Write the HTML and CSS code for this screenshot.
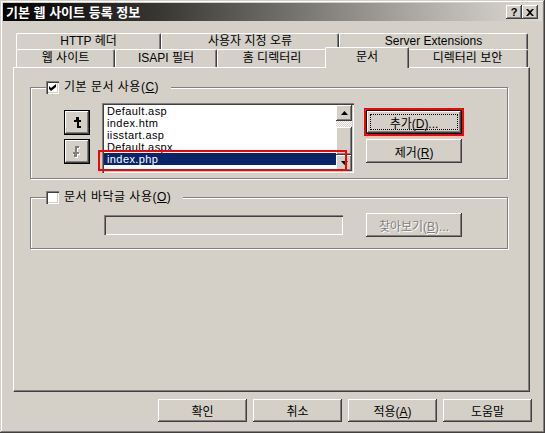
FILE: index.html
```html
<!DOCTYPE html>
<html lang="ko">
<head>
    <meta charset="UTF-8">
    <title>기본 웹 사이트 등록 정보</title>
    <link rel="stylesheet" href="styles.css">
</head>
<body>

    <div class="window">
        <div class="titlebar">
            <span class="title">기본 웹 사이트 등록 정보</span>
            <div class="caption-buttons">
                <span class="cap-btn">?</span>
                <span class="cap-btn">
                    <svg width="8" height="7" viewBox="0 0 8 7"><path d="M0 0h2l2 2 2-2h2l-3 3.5 3 3.5h-2l-2-2-2 2h-2l3-3.5z" fill="#000"/></svg>
                </span>
            </div>
        </div>

        <div class="dialog">
            <!-- 탭 -->
            <div class="tabs">
                <div class="tab-row back">
                    <div class="tab tab-http">HTTP 헤더</div>
                    <div class="tab tab-errors">사용자 지정 오류</div>
                    <div class="tab tab-ext">Server Extensions</div>
                </div>
                <div class="tab-row front">
                    <div class="tab tab-site">웹 사이트</div>
                    <div class="tab tab-isapi">ISAPI 필터</div>
                    <div class="tab tab-home">홈 디렉터리</div>
                    <div class="tab tab-docs active">문서</div>
                    <div class="tab tab-security">디렉터리 보안</div>
                </div>
            </div>

            <div class="panel">
                <fieldset class="group group-docs">
                    <legend>
                        <span class="checkbox">
                            <svg width="7" height="7" viewBox="0 0 7 7"><path d="M0 2l2 2 5-4v3l-5 4-2-2z" fill="#000"/></svg>
                        </span>
                        <span class="label">기본 문서 사용(<u>C</u>)</span>
                    </legend>
                    <div class="group-body">
                        <div class="order-buttons">
                            <button class="icon-btn">
                                <svg width="7" height="11" viewBox="0 0 7 11"><path d="M2 0h3v3h2v2h-2v4h2v2h-4v-6h-3v-2h2z" fill="#000"/></svg>
                            </button>
                            <button class="icon-btn" disabled>
                                <svg width="8" height="12" viewBox="0 0 8 12">
                                    <path d="M3 1h4v2h-2v4h2v2h-2v3h-3v-3h-2v-2h3z" fill="#fff"/>
                                    <path d="M2 0h4v2h-2v4h2v2h-2v3h-3v-3h-2v-2h3z" fill="#808080"/>
                                </svg>
                            </button>
                        </div>

                        <div class="list-wrap">
                            <ul class="file-list">
                                <li>Default.asp</li>
                                <li>index.htm</li>
                                <li>iisstart.asp</li>
                                <li>Default.aspx</li>
                                <li class="selected">index.php</li>
                            </ul>
                            <div class="scrollbar">
                                <div class="sb-btn">
                                    <svg width="7" height="4" viewBox="0 0 7 4"><path d="M3.5 0l3.5 4h-7z" fill="#000"/></svg>
                                </div>
                                <div class="sb-track"></div>
                                <div class="sb-thumb"></div>
                                <div class="sb-btn">
                                    <svg width="7" height="4" viewBox="0 0 7 4"><path d="M0 0h7l-3.5 4z" fill="#000"/></svg>
                                </div>
                            </div>
                            <div class="mark mark-item"></div>
                        </div>

                        <div class="side-buttons">
                            <button class="btn default marked">추가(<u>D</u>)...</button>
                            <button class="btn">제거(<u>R</u>)</button>
                        </div>
                    </div>
                </fieldset>

                <fieldset class="group group-footer">
                    <legend>
                        <span class="checkbox"></span>
                        <span class="label">문서 바닥글 사용(<u>O</u>)</span>
                    </legend>
                    <div class="group-body">
                        <input class="textbox" type="text" disabled>
                        <button class="btn" disabled>찾아보기(<u>B</u>)...</button>
                    </div>
                </fieldset>
            </div>

            <div class="actions">
                <button class="btn wide">확인</button>
                <button class="btn wide">취소</button>
                <button class="btn wide">적용(<u>A</u>)</button>
                <button class="btn wide">도움말</button>
            </div>
        </div>
    </div>

</body>
</html>
```

FILE: styles.css
```css
/* 클래식 윈도우 대화상자 */
:root {
    --face: #d4d0c8;
    --light: #ffffff;
    --shadow: #808080;
    --dark: #404040;
    --select: #0a246a;
}

* { box-sizing: border-box; }

body {
    margin: 0;
    background: var(--face);
    color: #000;
    font-family: "Liberation Sans", "Noto Sans CJK KR", sans-serif;
    font-size: 12px;
}

u { text-underline-offset: 1px; }

.window {
    width: 545px;
    height: 433px;
    padding: 3px;
    background: var(--face);
    box-shadow:
        inset -1px -1px var(--dark),
        inset 1px 1px var(--face),
        inset -2px -2px var(--shadow),
        inset 2px 2px var(--light);
}

/* 제목 표시줄 */
.titlebar {
    height: 18px;
    display: flex;
    align-items: center;
    padding-left: 3px;
    background: linear-gradient(90deg, #000 0%, #3a3936 30%, #a9a69f 75%, #dedbd5 100%);
    color: #fff;
}

.title {
    font-family: "Noto Sans CJK KR", sans-serif;
    font-weight: bold;
    font-size: 13px;
    line-height: 18px;
}

.caption-buttons {
    margin-left: auto;
    margin-right: 4px;
    display: flex;
}

.cap-btn {
    width: 16px;
    height: 14px;
    display: flex;
    align-items: center;
    justify-content: center;
    background: var(--face);
    color: #000;
    font: bold 11px "Liberation Sans", sans-serif;
    box-shadow:
        inset -1px -1px var(--dark),
        inset 1px 1px var(--light),
        inset -2px -2px var(--shadow);
}

.dialog { padding: 12px 0 0 10px; }

/* 탭 */
.tabs { margin-left: 3px; width: 512px; }

.tab-row { display: flex; }
.tab-row.back { height: 16px; }
.tab-row.front { height: 18px; }

.tab {
    background: var(--face);
    border-top: 1px solid var(--light);
    border-left: 1px solid var(--light);
    border-right: 1px solid var(--dark);
    border-radius: 2px 2px 0 0;
    box-shadow: inset -1px 0 var(--shadow);
    text-align: center;
    white-space: nowrap;
}

.back .tab { height: 16px; line-height: 15px; }
.front .tab { height: 18px; line-height: 17px; }

.tab-http { width: 145px; }
.tab-errors { width: 178px; }
.tab-ext { width: 189px; }
.tab-site { width: 99px; }
.tab-isapi { width: 102px; }
.tab-home { width: 110px; }
.tab-docs { width: 80px; }
.tab-security { width: 121px; }

.tab.active {
    position: relative;
    z-index: 1;
    width: 84px;
    height: 21px;
    margin: -2px -2px -1px;
    line-height: 18px;
}

/* 탭 내용 */
.panel {
    width: 517px;
    height: 325px;
    padding: 13px 21px 0 16px;
    border: 1px solid;
    border-color: var(--light) var(--dark) var(--dark) var(--light);
    box-shadow: inset -1px -1px var(--shadow);
}

.group {
    margin: 0;
    min-width: 0;
    border: 1px solid var(--shadow);
    box-shadow: inset 1px 1px var(--light), 1px 1px var(--light);
}

.group legend {
    display: flex;
    align-items: center;
    gap: 5px;
    height: 13px;
    padding: 0 12px 0 0;
    line-height: 13px;
    background: var(--face);
}

.group legend .label { letter-spacing: 0.5px; }

.group-docs { padding: 9px 0 5px 15px; }
.group-footer { margin-top: 12px; padding: 9px 0 11px 15px; }

.group-body { display: flex; align-items: flex-start; }
.group-docs .group-body { margin-left: 18px; }
.group-footer .group-body { margin-left: 58px; }

.checkbox {
    width: 13px;
    height: 13px;
    display: flex;
    align-items: center;
    justify-content: center;
    background: #fff;
    box-shadow:
        inset 1px 1px var(--shadow),
        inset 2px 2px var(--dark),
        inset -1px -1px var(--light),
        inset -2px -2px var(--face);
}

/* 버튼 */
button {
    font: inherit;
    color: #000;
    margin: 0;
    padding: 0;
    border: none;
}

.btn, .icon-btn {
    position: relative;
    background: var(--face);
    box-shadow:
        inset -1px -1px var(--dark),
        inset 1px 1px var(--light),
        inset -2px -2px var(--shadow);
}

.btn { width: 96px; height: 24px; }
.btn.wide { width: 89px; height: 23px; }

.btn.default {
    border: 1px solid #000;
}

.btn.default::after {
    content: "";
    position: absolute;
    inset: 3px;
    border: 1px dotted #000;
}

.btn.marked { outline: 2px solid #f00; }

.btn:disabled {
    color: var(--shadow);
    text-shadow: 1px 1px 0 var(--light);
}

.order-buttons {
    display: flex;
    flex-direction: column;
    gap: 4px;
    margin-top: 7px;
}

.icon-btn {
    width: 26px;
    height: 25px;
    display: flex;
    align-items: center;
    justify-content: center;
    border: 1px solid #000;
}

.side-buttons {
    display: flex;
    flex-direction: column;
    gap: 5px;
    margin-top: 7px;
    margin-left: 12px;
}

/* 목록 */
.list-wrap {
    position: relative;
    width: 252px;
    height: 70px;
    margin-left: 12px;
    padding: 2px;
    display: flex;
    background: #fff;
    box-shadow:
        inset 1px 1px var(--shadow),
        inset 2px 2px var(--dark),
        inset -1px -1px var(--light),
        inset -2px -2px var(--face);
}

.file-list {
    flex: 1;
    margin: 0;
    padding: 0;
    list-style: none;
    overflow: hidden;
}

.file-list li {
    height: 12px;
    font-size: 11px;
    letter-spacing: 0.4px;
    line-height: 12px;
    padding-left: 3px;
    white-space: nowrap;
}

.file-list li.selected { background: var(--select); color: #fff; }

.scrollbar {
    width: 16px;
    display: flex;
    flex-direction: column;
}

.sb-btn, .sb-thumb {
    background: var(--face);
    box-shadow:
        inset -1px -1px var(--dark),
        inset 1px 1px var(--light),
        inset -2px -2px var(--shadow);
}

.sb-btn {
    height: 16px;
    display: flex;
    align-items: center;
    justify-content: center;
}

.sb-track {
    height: 6px;
    background: repeating-conic-gradient(#fff 0 25%, var(--face) 0 50%) 0 0 / 2px 2px;
}

.sb-thumb { flex: 1; }

.mark {
    position: absolute;
    border: 2px solid #f00;
    pointer-events: none;
}

.mark-item { left: -4px; top: 47px; width: 249px; height: 21px; }

/* 바닥글 */
.textbox {
    width: 239px;
    height: 20px;
    margin: 2px 23px 0 0;
    border: none;
    background: var(--face);
    box-shadow:
        inset 1px 1px var(--shadow),
        inset 2px 2px var(--dark),
        inset -1px -1px var(--light),
        inset -2px -2px var(--face);
}

.actions {
    width: 519px;
    margin-top: 7px;
    display: flex;
    justify-content: flex-end;
    gap: 6px;
}
```
